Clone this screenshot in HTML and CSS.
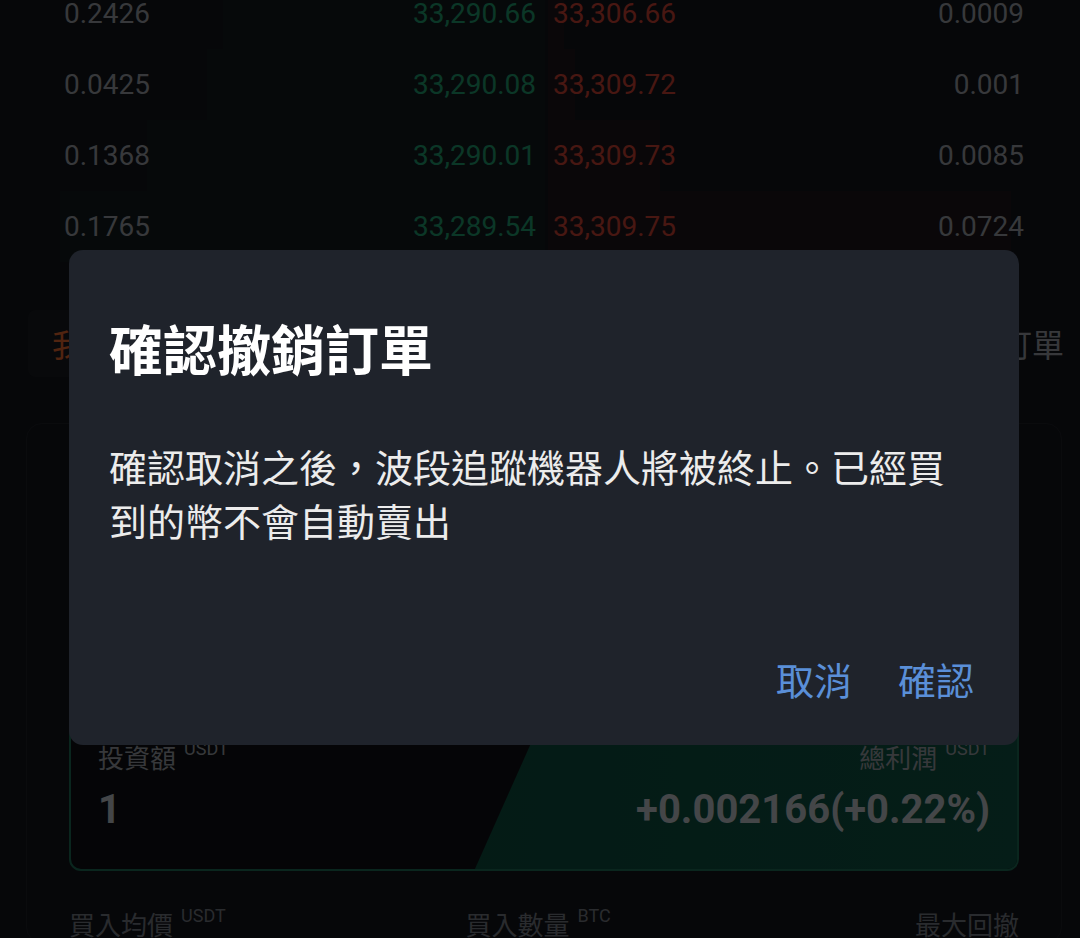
FILE: index.html
```html
<!DOCTYPE html>
<html lang="zh-Hant">
<head>
  <meta charset="UTF-8" />
  <meta name="viewport" content="width=device-width, initial-scale=1.0" />
  <title>確認撤銷訂單</title>
  <link rel="stylesheet" href="styles.css">
</head>
<body>
  <div class="book">
    <div class="book-row">
      <div class="bid"><span class="bar" style="width:59%"></span><span class="qty">0.2426</span><span class="price">33,290.66</span></div>
      <div class="ask"><span class="bar" style="width:3%"></span><span class="price">33,306.66</span><span class="qty">0.0009</span></div>
    </div>
    <div class="book-row">
      <div class="bid"><span class="bar" style="width:62%"></span><span class="qty">0.0425</span><span class="price">33,290.08</span></div>
      <div class="ask"><span class="bar" style="width:5%"></span><span class="price">33,309.72</span><span class="qty">0.001</span></div>
    </div>
    <div class="book-row">
      <div class="bid"><span class="bar" style="width:73%"></span><span class="qty">0.1368</span><span class="price">33,290.01</span></div>
      <div class="ask"><span class="bar" style="width:21%"></span><span class="price">33,309.73</span><span class="qty">0.0085</span></div>
    </div>
    <div class="book-row">
      <div class="bid"><span class="bar" style="width:89%"></span><span class="qty">0.1765</span><span class="price">33,289.54</span></div>
      <div class="ask"><span class="bar" style="width:87%"></span><span class="price">33,309.75</span><span class="qty">0.0724</span></div>
    </div>
  </div>

  <div class="tabs">
    <div class="tab active">我的機器人</div>
    <div class="tab">歷史訂單</div>
  </div>

  <div class="bot-card">
    <div class="pnl-card">
      <div class="pnl-col">
        <div class="label">投資額<span class="unit">USDT</span></div>
        <div class="value">1</div>
      </div>
      <div class="pnl-col right">
        <div class="label">總利潤<span class="unit">USDT</span></div>
        <div class="value">+0.002166(+0.22%)</div>
      </div>
    </div>
    <div class="stats">
      <div class="stat">買入均價<span class="unit">USDT</span></div>
      <div class="stat mid">買入數量<span class="unit">BTC</span></div>
      <div class="stat end">最大回撤</div>
    </div>
  </div>

  <div class="overlay">
    <div class="dialog">
      <h1 class="dialog-title">確認撤銷訂單</h1>
      <p class="dialog-text">確認取消之後，波段追蹤機器人將被終止。已經買到的幣不會自動賣出</p>
      <div class="dialog-actions">
        <button class="dialog-btn">取消</button>
        <button class="dialog-btn">確認</button>
      </div>
    </div>
  </div>
</body>
</html>
```

FILE: styles.css
```css
* {
  box-sizing: border-box;
}
html, body {
  margin: 0;
  height: 100%;
  overflow: hidden;
}
body {
  background-color: #12141a;
  font-family: Roboto, "Noto Sans CJK TC", sans-serif;
  color: #9da2a8;
}
.book {
  margin-top: -22px;
}
.book-row {
  display: grid;
  grid-template-columns: 545px 1fr;
  column-gap: 3px;
  height: 71px;
  font-size: 28px;
}
.bid, .ask {
  position: relative;
  display: flex;
  align-items: center;
  justify-content: space-between;
}
.bid {
  padding: 0 9px 0 64px;
}
.ask {
  padding: 0 56px 0 5px;
}
.bar {
  position: absolute;
  top: 0;
  bottom: 0;
}
.bid .bar {
  right: 0;
  background-color: rgba(46, 189, 133, 0.05);
}
.ask .bar {
  left: 0;
  background-color: rgba(227, 77, 63, 0.05);
}
.qty, .price {
  position: relative;
}
.bid .price {
  color: #229e70;
}
.ask .price {
  color: #cf4335;
}
.tabs {
  display: flex;
  justify-content: space-between;
  align-items: center;
  margin-top: 48px;
  padding: 0 16px 0 28px;
  height: 67px;
  font-family: "Noto Sans CJK TC", sans-serif;
  font-size: 32px;
}
.tab {
  line-height: 67px;
}
.tab.active {
  color: #e8692f;
  background-color: #191c21;
  padding: 0 24px;
  border-radius: 8px;
}
.bot-card {
  margin: 46px 18px 0 26px;
  border: 1px solid #1e2127;
  border-radius: 16px;
  padding: 288px 42px 0 42px;
  font-family: "Noto Sans CJK TC", sans-serif;
}
.pnl-card {
  position: relative;
  display: flex;
  justify-content: space-between;
  padding: 25px 27px 35px 27px;
  border: 2px solid #1f6e58;
  border-radius: 12px;
  background-color: #0f1115;
  overflow: hidden;
}
.pnl-card::before {
  content: "";
  position: absolute;
  top: 0;
  left: 0;
  right: 0;
  bottom: 0;
  background: linear-gradient(90deg, #0c4739, #0f5545);
  clip-path: polygon(50% 0, 100% 0, 100% 100%, 42.7% 100%);
}
.pnl-col {
  position: relative;
}
.pnl-col.right {
  text-align: right;
}
.label {
  font-size: 26px;
  line-height: 36px;
}
.unit {
  font-family: Roboto, sans-serif;
  font-size: 18px;
  line-height: 20px;
  vertical-align: top;
  margin-left: 8px;
}
.value {
  margin-top: 11px;
  font-family: Roboto, sans-serif;
  font-size: 40px;
  line-height: 48px;
  font-weight: 700;
  color: #c4c8cd;
}
.stats {
  display: grid;
  grid-template-columns: 1fr 1fr 1fr;
  margin-top: 35px;
  font-size: 26px;
  line-height: 36px;
  color: #767b83;
}
.stat.mid {
  text-align: center;
  padding-right: 12px;
}
.stat.end {
  text-align: right;
}
.overlay {
  position: fixed;
  top: 0;
  left: 0;
  width: 100%;
  height: 100%;
  background-color: rgba(0, 0, 0, 0.65);
  display: flex;
  align-items: flex-start;
  padding: 250px 0 0 69px;
}
.dialog {
  width: 950px;
  background-color: #1f232b;
  border-radius: 14px;
  padding: 62px 40px 39px;
  font-family: "Noto Sans CJK TC", sans-serif;
}
.dialog-title {
  margin: 0;
  font-size: 54px;
  line-height: 72px;
  font-weight: 700;
  color: #fff;
}
.dialog-text {
  margin: 55px 0 0;
  font-size: 38px;
  line-height: 54px;
  color: #ececec;
}
.dialog-actions {
  display: flex;
  justify-content: flex-end;
  gap: 46px;
  margin-top: 105px;
  padding-right: 5px;
}
.dialog-btn {
  background: none;
  border: none;
  padding: 0;
  font-family: inherit;
  font-size: 38px;
  line-height: 54px;
  color: #5a8fd8;
  cursor: pointer;
}
```
